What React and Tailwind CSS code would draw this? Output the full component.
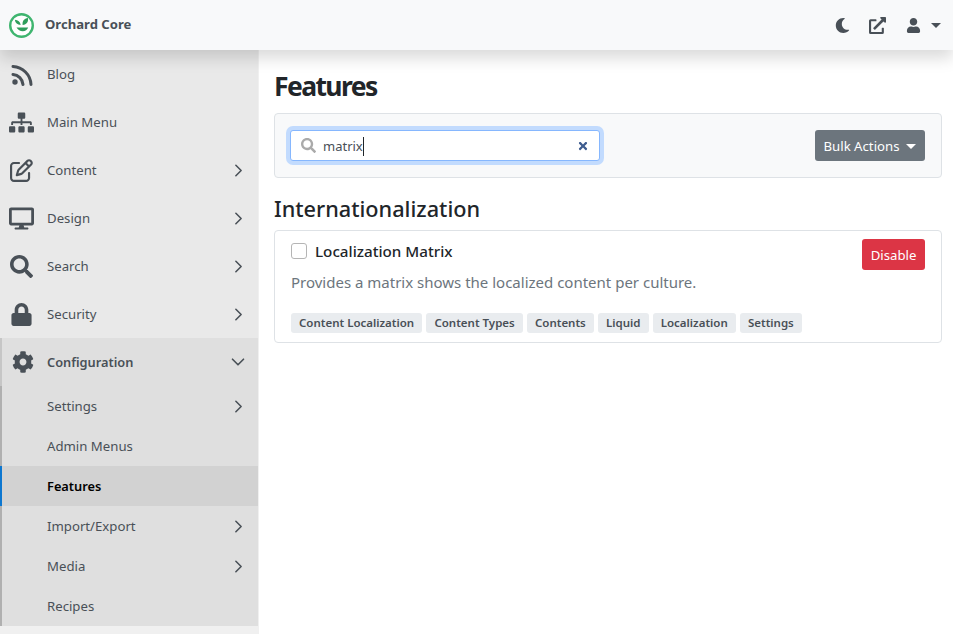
import React from "react";
import { ChevronRight, ChevronDown } from "lucide-react";
import {
  FaSitemap,
  FaDesktop,
  FaSearch,
  FaLock,
  FaCog,
  FaMoon,
  FaExternalLinkAlt,
  FaUser,
  FaTimes,
} from "react-icons/fa";
import { FaRegPenToSquare } from "react-icons/fa6";

const RssIcon = ({ size }) => (
  <svg width={size} height={size} viewBox="0 0 24 24" fill="none" stroke="currentColor" strokeWidth="3" strokeLinecap="round">
    <path d="M3 4.500A19 19 0 0 1 21 22.500" />
    <path d="M3 12.500A11 11 0 0 1 13 22.500" />
    <circle cx="5" cy="20" r="2.700" fill="currentColor" stroke="none" />
  </svg>
);

const topItems = [
  { label: "Blog", icon: RssIcon, size: 24 },
  { label: "Main Menu", icon: FaSitemap, size: 25 },
  { label: "Content", icon: FaRegPenToSquare, size: 23, more: true },
  { label: "Design", icon: FaDesktop, size: 25, more: true },
  { label: "Search", icon: FaSearch, size: 23, more: true },
  { label: "Security", icon: FaLock, size: 23, more: true },
];

const subItems = [
  { label: "Settings", more: true },
  { label: "Admin Menus" },
  { label: "Features", active: true },
  { label: "Import/Export", more: true },
  { label: "Media", more: true },
  { label: "Recipes" },
];

const tags = ["Content Localization", "Content Types", "Contents", "Liquid", "Localization", "Settings"];

const Logo = () => (
  <svg width="25" height="25" viewBox="0 0 25 25">
    <circle cx="12.500" cy="12.500" r="11.300" fill="#fff" stroke="#3fb56f" strokeWidth="2.400" />
    <path d="M5.800 6.800c3.300.1 5.400 1.900 5.900 5.200-3.300-.1-5.400-1.900-5.900-5.200z" fill="#2f9e5c" />
    <path d="M19 5c.5 3.900-1.200 6.300-5.400 7-.5-3.800 1.300-6.300 5.400-7z" fill="#2f9e5c" />
    <path d="M7.500 14.600h11.700c-.9 2.400-2.800 3.700-5.400 3.700-2.600 0-4.900-1.300-6.300-3.700z" fill="#2f9e5c" />
  </svg>
);

const Caret = ({ color = "border-t-[#495057]" }) => (
  <span className={`inline-block w-0 h-0 border-x-[5px] border-x-transparent border-t-[5px] ${color}`} />
);

const App = () => {
  return (
    <div className="h-screen overflow-hidden flex flex-col bg-white text-[#212529] text-base font-['Noto_Sans','Open_Sans',sans-serif]">
      <header className="relative z-10 h-[50px] shrink-0 flex items-center justify-between bg-[#f8f9fa] pl-[9px] pr-3 shadow-[0_8px_16px_rgba(0,0,0,0.15)]">
        <div className="flex items-center gap-[11px]">
          <Logo />
          <span className="text-[13.1px] font-bold text-[#495057]">Orchard Core</span>
        </div>
        <div className="flex items-center text-[#495057]">
          <FaMoon size={15} className="mr-[19px]" />
          <FaExternalLinkAlt size={17} className="mr-[20px]" />
          <FaUser size={15} className="mr-[10px]" />
          <Caret />
        </div>
      </header>

      <div className="flex flex-1 min-h-0">
        <aside className="w-[259px] shrink-0 overflow-hidden bg-[#e9e9e9] border-r border-[#f0f0f0]">
          <nav className="text-[13.2px] text-[#495057]">
            {topItems.map(({ label, icon: Icon, more, size }) => (
              <div key={label} className="h-12 flex items-center">
                <span className="w-[43px] mr-1 flex justify-center text-[#495057]">
                  <Icon size={size} />
                </span>
                <span className="flex-1 pt-[2px]">{label}</span>
                {more && <ChevronRight size={21} strokeWidth={1.8} className="mr-[9px]" />}
              </div>
            ))}
            <div className="bg-[#dfdfdf] border-l-2 border-[#c6c6c6]">
              <div className="h-12 flex items-center font-semibold text-[12.8px]">
                <span className="w-[41px] mr-1 flex justify-center">
                  <FaCog size={22} />
                </span>
                <span className="flex-1 pt-[2px]">Configuration</span>
                <ChevronDown size={22} strokeWidth={1.8} className="mr-[9px]" />
              </div>
            </div>
            <div className="bg-[#dfdfdf] border-l-2 border-[#b0b0b0]">
              {subItems.map(({ label, more, active }) => (
                <div
                  key={label}
                  className={
                    active
                      ? "relative h-10 flex items-center pl-[45px] bg-[#d2d2d2] font-semibold text-black text-[12.8px]"
                      : "relative h-10 flex items-center pl-[45px]"
                  }
                >
                  {active && <span className="absolute -left-[2px] inset-y-0 w-[2px] bg-[#0d77d0]" />}
                  <span className="flex-1 pt-[2px]">{label}</span>
                  {more && <ChevronRight size={21} strokeWidth={1.8} className="mr-[9px]" />}
                </div>
              ))}
            </div>
            <div className="h-2 bg-[#f0f0f0]" />
          </nav>
        </aside>

        <main className="flex-1 min-w-0 pl-[15px] pr-[11px]">
          <h1 className="mt-[18px] mb-[8px] text-[26.5px] leading-[37px] font-bold tracking-[-1.6px] text-[#212529]">Features</h1>

          <div className="h-[65px] flex items-center justify-between bg-[#f8f9fa] border border-[#dee2e6] rounded pl-[15px] pr-4">
            <div className="relative w-[310px] h-[31px] flex items-center bg-white border border-[#86b7fe] rounded-[3px] ring-4 ring-[#c2dbfe] pl-[10px] pr-[11px]">
              <FaSearch size={15} className="text-[#aaaaaa] mr-[7px]" />
              <span className="flex-1 flex items-center text-[13px] text-[#495057] pt-[2px]">
                matrix
                <span className="inline-block w-px h-[19px] bg-[#212529]" />
              </span>
              <FaTimes size={12} className="text-[#3e5c8f] translate-x-px" />
            </div>
            <button className="h-[31px] w-[110px] flex items-center justify-center gap-[7px] pt-[2px] bg-[#6c757d] text-white text-[13.2px] rounded-[3px]">
              Bulk Actions
              <Caret color="border-t-white" />
            </button>
          </div>

          <h2 className="mt-[14px] mb-[4px] text-[21.7px] leading-[34px] font-medium text-[#212529]">Internationalization</h2>

          <div className="h-[113px] bg-white border border-[#dee2e6] rounded px-4 pt-[8px]">
            <div className="flex items-start justify-between">
              <label className="flex items-start gap-2 mt-[4px] h-[16px]">
                <span className="w-4 h-4 shrink-0 bg-white border border-[#b5b5b5] rounded-[3px]" />
                <span className="-mt-[3px] text-[15.2px] leading-[22px] font-medium text-[#212529]">Localization Matrix</span>
              </label>
              <button className="h-[31px] w-[63px] pt-[2px] bg-[#dc3545] text-white text-[13.2px] rounded-[3px]">Disable</button>
            </div>
            <p className="mt-[1px] text-[15px] leading-[22px] text-[#6c757d]">Provides a matrix shows the localized content per culture.</p>
            <div className="flex gap-[4.2px] mt-[20px]">
              {tags.map((tag) => (
                <span
                  key={tag}
                  className="h-5 flex items-center px-2 bg-[#e9ecef] rounded-[3px] text-[11.5px] font-semibold text-[#495057]"
                >
                  {tag}
                </span>
              ))}
            </div>
          </div>
        </main>
      </div>
    </div>
  );
};

export default App;
